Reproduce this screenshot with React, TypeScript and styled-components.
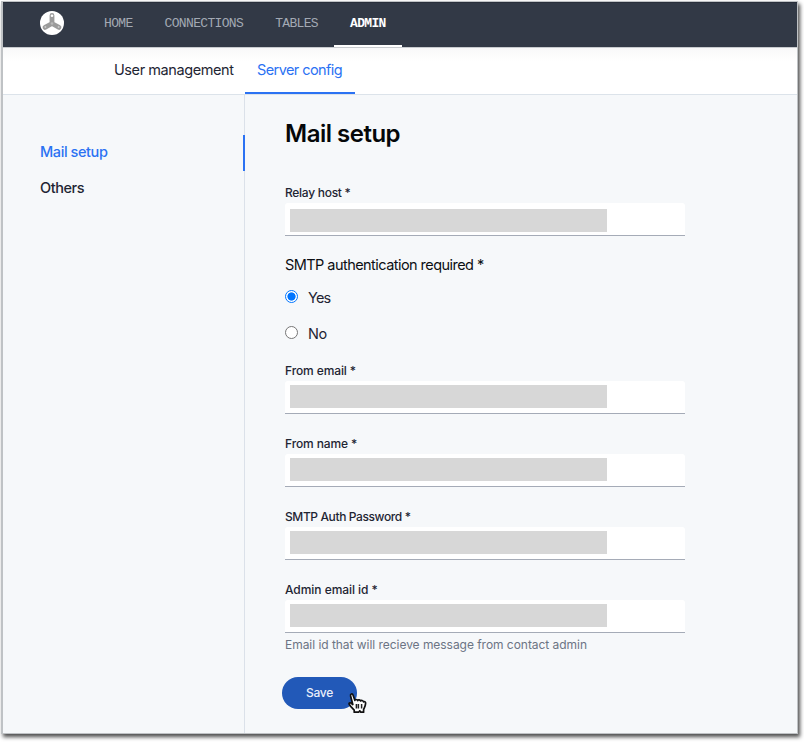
import React from 'react';
import styled, { createGlobalStyle, css } from 'styled-components';

const GlobalStyle = createGlobalStyle`
  * { box-sizing: border-box; }
  body { margin: 0; background: #fff; font-family: Inter, 'Liberation Sans', sans-serif; }
`;

type Tracked = { $tracking?: number };
const tracking = css<Tracked>`letter-spacing: ${(p) => p.$tracking ?? 0}px;`;

const Page = styled.div`
  height: 742px;
  padding: 1px 0 0 1px;
  overflow: hidden;
`;

const Window = styled.div`
  display: flex;
  flex-direction: column;
  width: 797px;
  height: 733px;
  border: solid #bfc2c5;
  border-width: 1px 1px 1px 2px;
  background: #f6f8fa;
  box-shadow: 2px 3px 4px rgba(0, 0, 0, 0.7);
`;

const Header = styled.header`
  display: flex;
  flex: none;
  height: 45px;
  padding-left: 37px;
  background: #323946;
  box-shadow: inset 0 1px 0 #292f3b;
`;

const Logo = styled.svg`
  flex: none;
  width: 24px;
  height: 24px;
  margin: 9px 24px 0 0;
`;

const MainNav = styled.nav`
  display: flex;
`;

const NavItem = styled.a<{ $active?: boolean }>`
  height: 45px;
  padding: 0 16px;
  font: ${(p) => (p.$active ? 700 : 400)} 13px/43px 'Liberation Mono', monospace;
  letter-spacing: -0.66px;
  color: ${(p) => (p.$active ? '#fff' : '#a3a9b4')};
  box-shadow: ${(p) => (p.$active ? 'inset 0 -2px 0 #fff' : 'none')};
`;

const SubNav = styled.nav`
  display: flex;
  flex: none;
  height: 48px;
  padding-left: 99px;
  border-top: 1px solid #c8cbcf;
  border-bottom: 1px solid #dce3ea;
  background: linear-gradient(#f8f8f9, #fff 14px);
`;

const SubTab = styled.a<Tracked & { $active?: boolean; $width: number }>`
  width: ${(p) => p.$width}px;
  height: 46px;
  padding-left: 12px;
  font-size: 14.5px;
  line-height: 43px;
  white-space: nowrap;
  color: ${(p) => (p.$active ? '#2b72f3' : '#1e2533')};
  box-shadow: ${(p) => (p.$active ? 'inset 0 -2px 0 #2b72f3' : 'none')};
  ${tracking}
`;

const Body = styled.div`
  display: flex;
  flex: 1;
  min-height: 0;
`;

const Sidebar = styled.aside`
  flex: none;
  width: 242px;
  padding-top: 40px;
  border-right: 1px solid #dbe1e9;
`;

const SideItem = styled.a<Tracked & { $active?: boolean }>`
  display: block;
  height: 36px;
  margin-right: -1px;
  padding-left: 37px;
  border-right: 2px solid ${(p) => (p.$active ? '#2b72f3' : 'transparent')};
  font-size: 14.5px;
  font-weight: 500;
  line-height: 33px;
  color: ${(p) => (p.$active ? '#2b72f3' : '#1e2533')};
  ${tracking}
`;

const Content = styled.main`
  width: 440px;
  padding: 23px 0 0 40px;
`;

const Title = styled.h1`
  height: 32px;
  margin: 0 0 33px;
  font-size: 24px;
  font-weight: 600;
  line-height: 32px;
  letter-spacing: -0.5px;
  color: #050709;
`;

const Field = styled.div`
  margin-bottom: 20px;
`;

const Label = styled.label<Tracked>`
  display: block;
  height: 20px;
  font-size: 12px;
  font-weight: 500;
  line-height: 20px;
  color: #1e2533;
  ${tracking}
`;

const InputBox = styled.div<{ $inset?: number }>`
  width: 400px;
  height: 33px;
  padding: ${(p) => p.$inset ?? 4}px 0 0 5px;
  border-bottom: 1px solid #a5abb7;
  border-radius: 3px 3px 0 0;
  background: #fff;
`;

const Redacted = styled.div`
  width: 317px;
  height: 23px;
  background: #d7d7d7;
`;

const Hint = styled.p`
  height: 20px;
  margin: 2px 0 0;
  font-size: 12px;
  line-height: 20px;
  letter-spacing: -0.04px;
  color: #6c7484;
`;

const Group = styled.div`
  margin: -1px 0 9px;
`;

const GroupTitle = styled.div`
  height: 20px;
  margin-bottom: 5px;
  font-size: 14.5px;
  line-height: 20px;
  letter-spacing: -0.55px;
  color: #0c0f14;
`;

const RadioRow = styled.label<Tracked>`
  display: flex;
  height: 36px;
  gap: 10px;
  font-size: 14.5px;
  line-height: 36px;
  color: #1e2533;
  ${tracking}
`;

const Dot = styled.span<{ $checked?: boolean }>`
  width: 13px;
  height: 13px;
  margin-top: 10px;
  border: 1px solid ${(p) => (p.$checked ? '#0075ff' : '#767676')};
  border-radius: 50%;
  background: ${(p) => (p.$checked ? 'radial-gradient(circle, #0075ff 3.7px, #fff 4.5px)' : '#fff')};
`;

const Actions = styled.div`
  position: relative;
  width: 75px;
  margin: 22px 0 0 -3px;
`;

const SaveButton = styled.button`
  display: block;
  width: 75px;
  height: 32px;
  padding: 0;
  border: 0;
  border-radius: 16px;
  background: #2259b8;
  font: 500 12px/30px Inter, sans-serif;
  letter-spacing: -0.3px;
  color: #e9effa;
`;

const Pointer = styled.svg`
  position: absolute;
  left: 64px;
  top: 15px;
  width: 21px;
  height: 22px;
`;

const NAV = ['HOME', 'CONNECTIONS', 'TABLES', 'ADMIN'];
const LOWER_FIELDS: [string, number][] = [
  ['From email *', -0.11],
  ['From name *', -0.12],
  ['SMTP Auth Password *', -0.39],
];

export default function App() {
  return (
    <Page>
      <GlobalStyle />
      <Window>
        <Header>
          <Logo viewBox="0 0 24 24">
            <circle cx="12" cy="12" r="12" fill="#fff" />
            <path d="M12 4.5V12.5L5 16.4M12 12.5L19 16.4" stroke="#9b9b9b" strokeWidth="4.8" strokeLinecap="round" strokeLinejoin="round" fill="none" />
            <circle cx="12" cy="4.7" r="1.3" fill="#fff" />
            <circle cx="12" cy="12.5" r="1.3" fill="#b8b8b8" />
            <circle cx="5.4" cy="16.1" r="1" fill="#c9c9c9" />
            <circle cx="18.6" cy="16.1" r="1" fill="#c9c9c9" />
          </Logo>
          <MainNav>
            {NAV.map((n) => (
              <NavItem key={n} $active={n === 'ADMIN'}>{n}</NavItem>
            ))}
          </MainNav>
        </Header>
        <SubNav>
          <SubTab $width={143} $tracking={-0.42}>User management</SubTab>
          <SubTab $active $width={110} $tracking={-0.58}>Server config</SubTab>
        </SubNav>
        <Body>
          <Sidebar>
            <SideItem $active $tracking={-0.41}>Mail setup</SideItem>
            <SideItem $tracking={-0.42}>Others</SideItem>
          </Sidebar>
          <Content>
            <Title>Mail setup</Title>
            <Field>
              <Label $tracking={-0.28}>Relay host *</Label>
              <InputBox $inset={6}><Redacted /></InputBox>
            </Field>
            <Group>
              <GroupTitle>SMTP authentication required *</GroupTitle>
              <RadioRow $tracking={-0.8}><Dot $checked />Yes</RadioRow>
              <RadioRow $tracking={-0.3}><Dot />No</RadioRow>
            </Group>
            {LOWER_FIELDS.map(([text, t]) => (
              <Field key={text}>
                <Label $tracking={t}>{text}</Label>
                <InputBox><Redacted /></InputBox>
              </Field>
            ))}
            <Label $tracking={-0.05}>Admin email id *</Label>
            <InputBox><Redacted /></InputBox>
            <Hint>Email id that will recieve message from contact admin</Hint>
            <Actions>
              <SaveButton>Save</SaveButton>
              <Pointer viewBox="0 0 21 22">
                <path
                  d="M8.2 20.2V18.2L5.4 15.2L3.2 12.4C2.6 11.2 3.8 10.4 5 11L6.8 12.5L4.6 4C4.1 1.9 6.4 1.2 7.1 3.2L8.9 8.4C9.2 7.2 11.2 7.1 11.7 8.6C12.2 7.3 14.2 7.6 14.6 9C15.3 8 17 8.4 17.6 9.8C18.8 9.3 19.8 9.9 19.6 11.4C19.4 14.4 18.2 15.6 17.6 17.4V20.2H14.8L13.8 18.8L12.6 20.2Z"
                  fill="#fff" stroke="#111" strokeWidth="1.7" strokeLinejoin="round"
                />
                <path d="M10.4 12V16.6M12.4 12V16.6M15.6 12V16.6" stroke="#222" strokeWidth="1.5" fill="none" />
              </Pointer>
            </Actions>
          </Content>
        </Body>
      </Window>
    </Page>
  );
}
